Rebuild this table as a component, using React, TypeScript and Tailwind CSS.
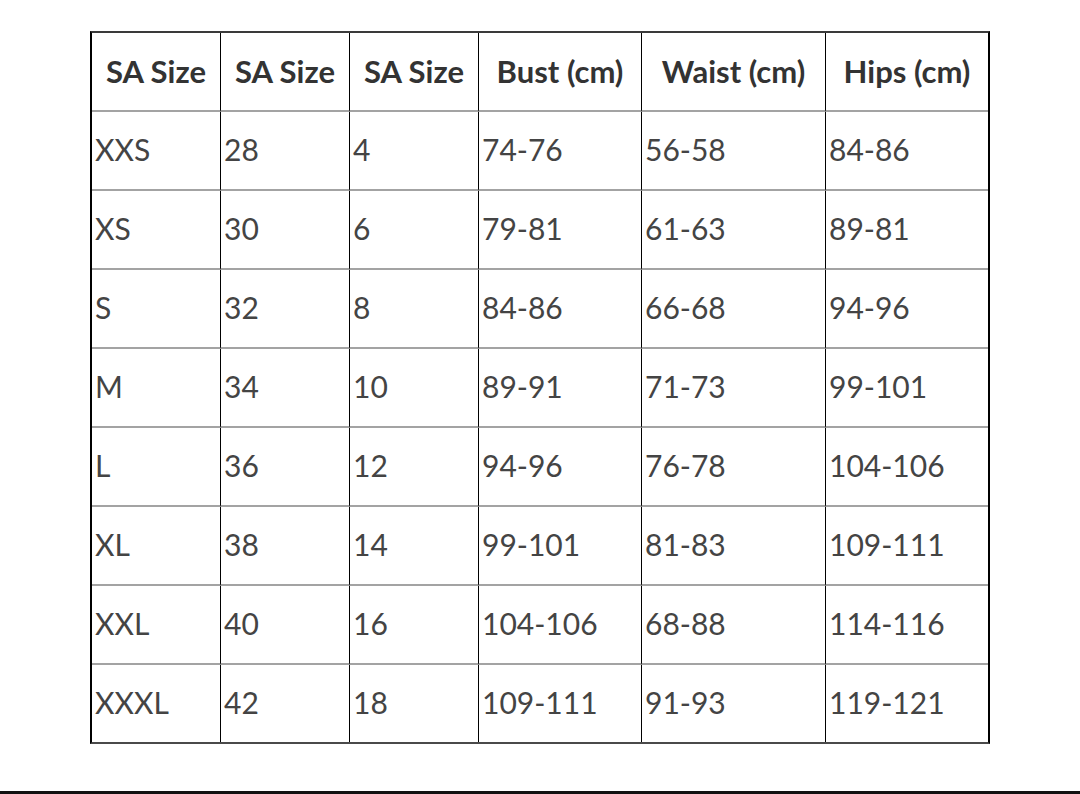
const header = ["SA Size", "SA Size", "SA Size", "Bust (cm)", "Waist (cm)", "Hips (cm)"];

const rows = [
  ["XXS", "28", "4", "74-76", "56-58", "84-86"],
  ["XS", "30", "6", "79-81", "61-63", "89-81"],
  ["S", "32", "8", "84-86", "66-68", "94-96"],
  ["M", "34", "10", "89-91", "71-73", "99-101"],
  ["L", "36", "12", "94-96", "76-78", "104-106"],
  ["XL", "38", "14", "99-101", "81-83", "109-111"],
  ["XXL", "40", "16", "104-106", "68-88", "114-116"],
  ["XXXL", "42", "18", "109-111", "91-93", "119-121"],
];

export default function App() {
  return (
    <div className="w-[1080px] h-[794px] bg-white flex flex-col overflow-hidden" style={{ fontFamily: "Lato, 'Open Sans', sans-serif" }}>
      <div className="pt-[31px] pl-[90px]">
        <div className="w-[900px] border-2 border-l-black border-r-black border-t-[#3a3a3a] border-b-[#4a4a4a] grid grid-cols-[129px_129px_129px_163px_184px_162px]">
          {header.map((h, i) => (
            <div
              key={"h" + i}
              className={`h-[79px] flex items-center justify-center border-b-2 border-b-[#a3a3a3] text-[31px] font-bold text-[#333] ${i < 5 ? "border-r border-r-black" : ""}`}
            >
              {h}
            </div>
          ))}
          {rows.map((r, ri) =>
            r.map((c, ci) => (
              <div
                key={ri + "-" + ci}
                className={`${ri < rows.length - 1 ? "h-[79px] border-b-2 border-b-[#a3a3a3]" : "h-[77px]"} flex items-center pl-[3px] pb-[2px] text-[30px] text-[#444] ${ci < 5 ? "border-r border-r-black" : ""}`}
              >
                {c}
              </div>
            ))
          )}
        </div>
      </div>
      <div className="mt-[47px] h-[3px] bg-[#111] w-full" />
    </div>
  );
}
